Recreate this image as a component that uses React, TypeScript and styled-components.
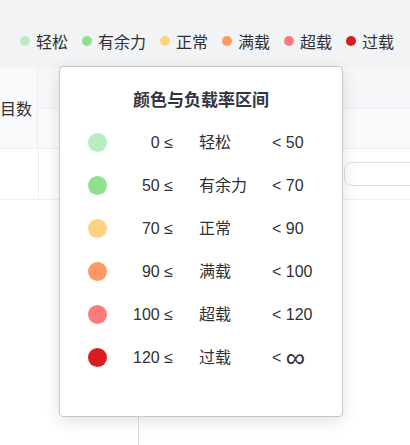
import React from "react";
import styled, { createGlobalStyle } from "styled-components";

interface LoadLevel {
  label: string;
  color: string;
  min: string;
  max: string;
}

const levels: LoadLevel[] = [
  { label: "轻松", color: "#b9ecc1", min: "0", max: "50" },
  { label: "有余力", color: "#8ee08e", min: "50", max: "70" },
  { label: "正常", color: "#ffd280", min: "70", max: "90" },
  { label: "满载", color: "#ff9963", min: "90", max: "100" },
  { label: "超载", color: "#ff7b7b", min: "100", max: "120" },
  { label: "过载", color: "#d71d1f", min: "120", max: "∞" },
];

const GlobalStyle = createGlobalStyle`
  html, body {
    margin: 0;
    padding: 0;
    background: #ffffff;
  }
  body {
    font-family: "Liberation Sans", "Noto Sans CJK SC", sans-serif;
    color: #303133;
  }
`;

const App: React.FC = () => {
  return (
    <Page>
      <GlobalStyle />
      <Toolbar>
        <Legend>
          {levels.map((lv) => (
            <LegendItem key={lv.label}>
              <LegendDot color={lv.color} />
              {lv.label}
            </LegendItem>
          ))}
        </Legend>
      </Toolbar>

      <Table>
        <HeadRow>
          <FixedHead>目数</FixedHead>
          <HeadGroup>
            <SubHead />
            <SubHead $last />
          </HeadGroup>
        </HeadRow>
        <BodyRow>
          <FixedCell />
          <WideCell />
          <InputCell>
            <CellInput />
          </InputCell>
        </BodyRow>
      </Table>

      <EmptyBody>
        <EmptyColumn />
      </EmptyBody>

      <Popover>
        <PopoverTitle>颜色与负载率区间</PopoverTitle>
        <RangeList>
          {levels.map((lv) => (
            <RangeRow key={lv.label}>
              <RangeDot color={lv.color} />
              <RangeMin>{lv.min} ≤</RangeMin>
              <RangeLabel>{lv.label}</RangeLabel>
              <RangeMax>
                &lt;{" "}
                {lv.max === "∞" ? <InfinitySign>∞</InfinitySign> : lv.max}
              </RangeMax>
            </RangeRow>
          ))}
        </RangeList>
      </Popover>
    </Page>
  );
};

export default App;

const Page = styled.div`
  position: relative;
  display: flex;
  flex-direction: column;
  width: 410px;
  height: 445px;
  overflow: hidden;
  background: #ffffff;
`;

const Toolbar = styled.div`
  display: flex;
  justify-content: flex-end;
  align-items: center;
  height: 68px;
  box-sizing: border-box;
  padding: 14px 16px 0 0;
  background: #f2f3f5;
`;

const Legend = styled.div`
  display: flex;
  align-items: center;
  gap: 14px;
`;

const LegendItem = styled.div`
  display: flex;
  align-items: center;
  gap: 6px;
  font-family: "Noto Sans CJK SC", sans-serif;
  font-size: 16px;
  line-height: 22px;
  color: #2d3036;
`;

const LegendDot = styled.span<{ color: string }>`
  width: 10px;
  height: 10px;
  border-radius: 50%;
  background: ${(p) => p.color};
`;

const Table = styled.div`
  display: flex;
  flex-direction: column;
  background: #ffffff;
`;

const HeadRow = styled.div`
  display: flex;
  height: 80px;
  background: #f8f9fb;
  border-bottom: 1px solid #ebeef5;
`;

const FixedHead = styled.div`
  display: flex;
  align-items: center;
  width: 38px;
  flex-shrink: 0;
  box-sizing: border-box;
  white-space: nowrap;
  border-right: 1px solid #ebeef5;
  font-family: "Noto Sans CJK SC", sans-serif;
  font-size: 16px;
  color: #303133;
`;

const HeadGroup = styled.div`
  display: flex;
  flex-direction: column;
  flex: 1;
`;

const SubHead = styled.div<{ $last?: boolean }>`
  flex: 1;
  background: ${(p) => (p.$last ? "#f9fafc" : "#f6f7f9")};
  border-bottom: ${(p) => (p.$last ? "none" : "1px solid #ebeef5")};
`;

const BodyRow = styled.div`
  display: flex;
  height: 50px;
  border-bottom: 1px solid #ebeef5;
`;

const FixedCell = styled.div`
  width: 38px;
  flex-shrink: 0;
  border-right: 1px solid #ebeef5;
`;

const WideCell = styled.div`
  width: 297px;
  flex-shrink: 0;
`;

const InputCell = styled.div`
  display: flex;
  align-items: center;
  flex: 1;
  padding-left: 8px;
`;

const CellInput = styled.div`
  width: 120px;
  height: 22px;
  border: 1px solid #dcdfe6;
  border-radius: 8px;
  background: #ffffff;
`;

const EmptyBody = styled.div`
  display: flex;
  flex: 1;
`;

const EmptyColumn = styled.div`
  width: 138px;
  border-right: 1px solid #d3dde9;
`;

const Popover = styled.div`
  position: absolute;
  left: 59px;
  top: 66px;
  width: 284px;
  height: 351px;
  box-sizing: border-box;
  padding: 21px 0 0 28px;
  background: #ffffff;
  border: 1px solid #c6c8cc;
  border-radius: 4px;
  box-shadow: 0 4px 16px rgba(0, 0, 0, 0.12);
`;

const PopoverTitle = styled.div`
  margin-left: -28px;
  text-align: center;
  font-family: "Noto Sans CJK SC", sans-serif;
  font-size: 17px;
  font-weight: 700;
  line-height: 22px;
  color: #2f3542;
`;

const RangeList = styled.div`
  display: flex;
  flex-direction: column;
  margin-top: 11px;
`;

const RangeRow = styled.div`
  display: grid;
  grid-template-columns: 20px 65px 99px auto;
  align-items: center;
  height: 43px;
  font-family: "Liberation Sans", "Noto Sans CJK SC", sans-serif;
  font-size: 16px;
  line-height: 20px;
  color: #303133;
`;

const RangeDot = styled.span<{ color: string }>`
  width: 19px;
  height: 19px;
  border-radius: 50%;
  background: ${(p) => p.color};
`;

const RangeMin = styled.span`
  text-align: right;
`;

const RangeLabel = styled.span`
  padding-left: 26px;
  white-space: nowrap;
`;

const RangeMax = styled.span`
  display: flex;
  align-items: center;
  white-space: pre;
`;

const InfinitySign = styled.span`
  font-size: 27px;
  line-height: 20px;
`;
